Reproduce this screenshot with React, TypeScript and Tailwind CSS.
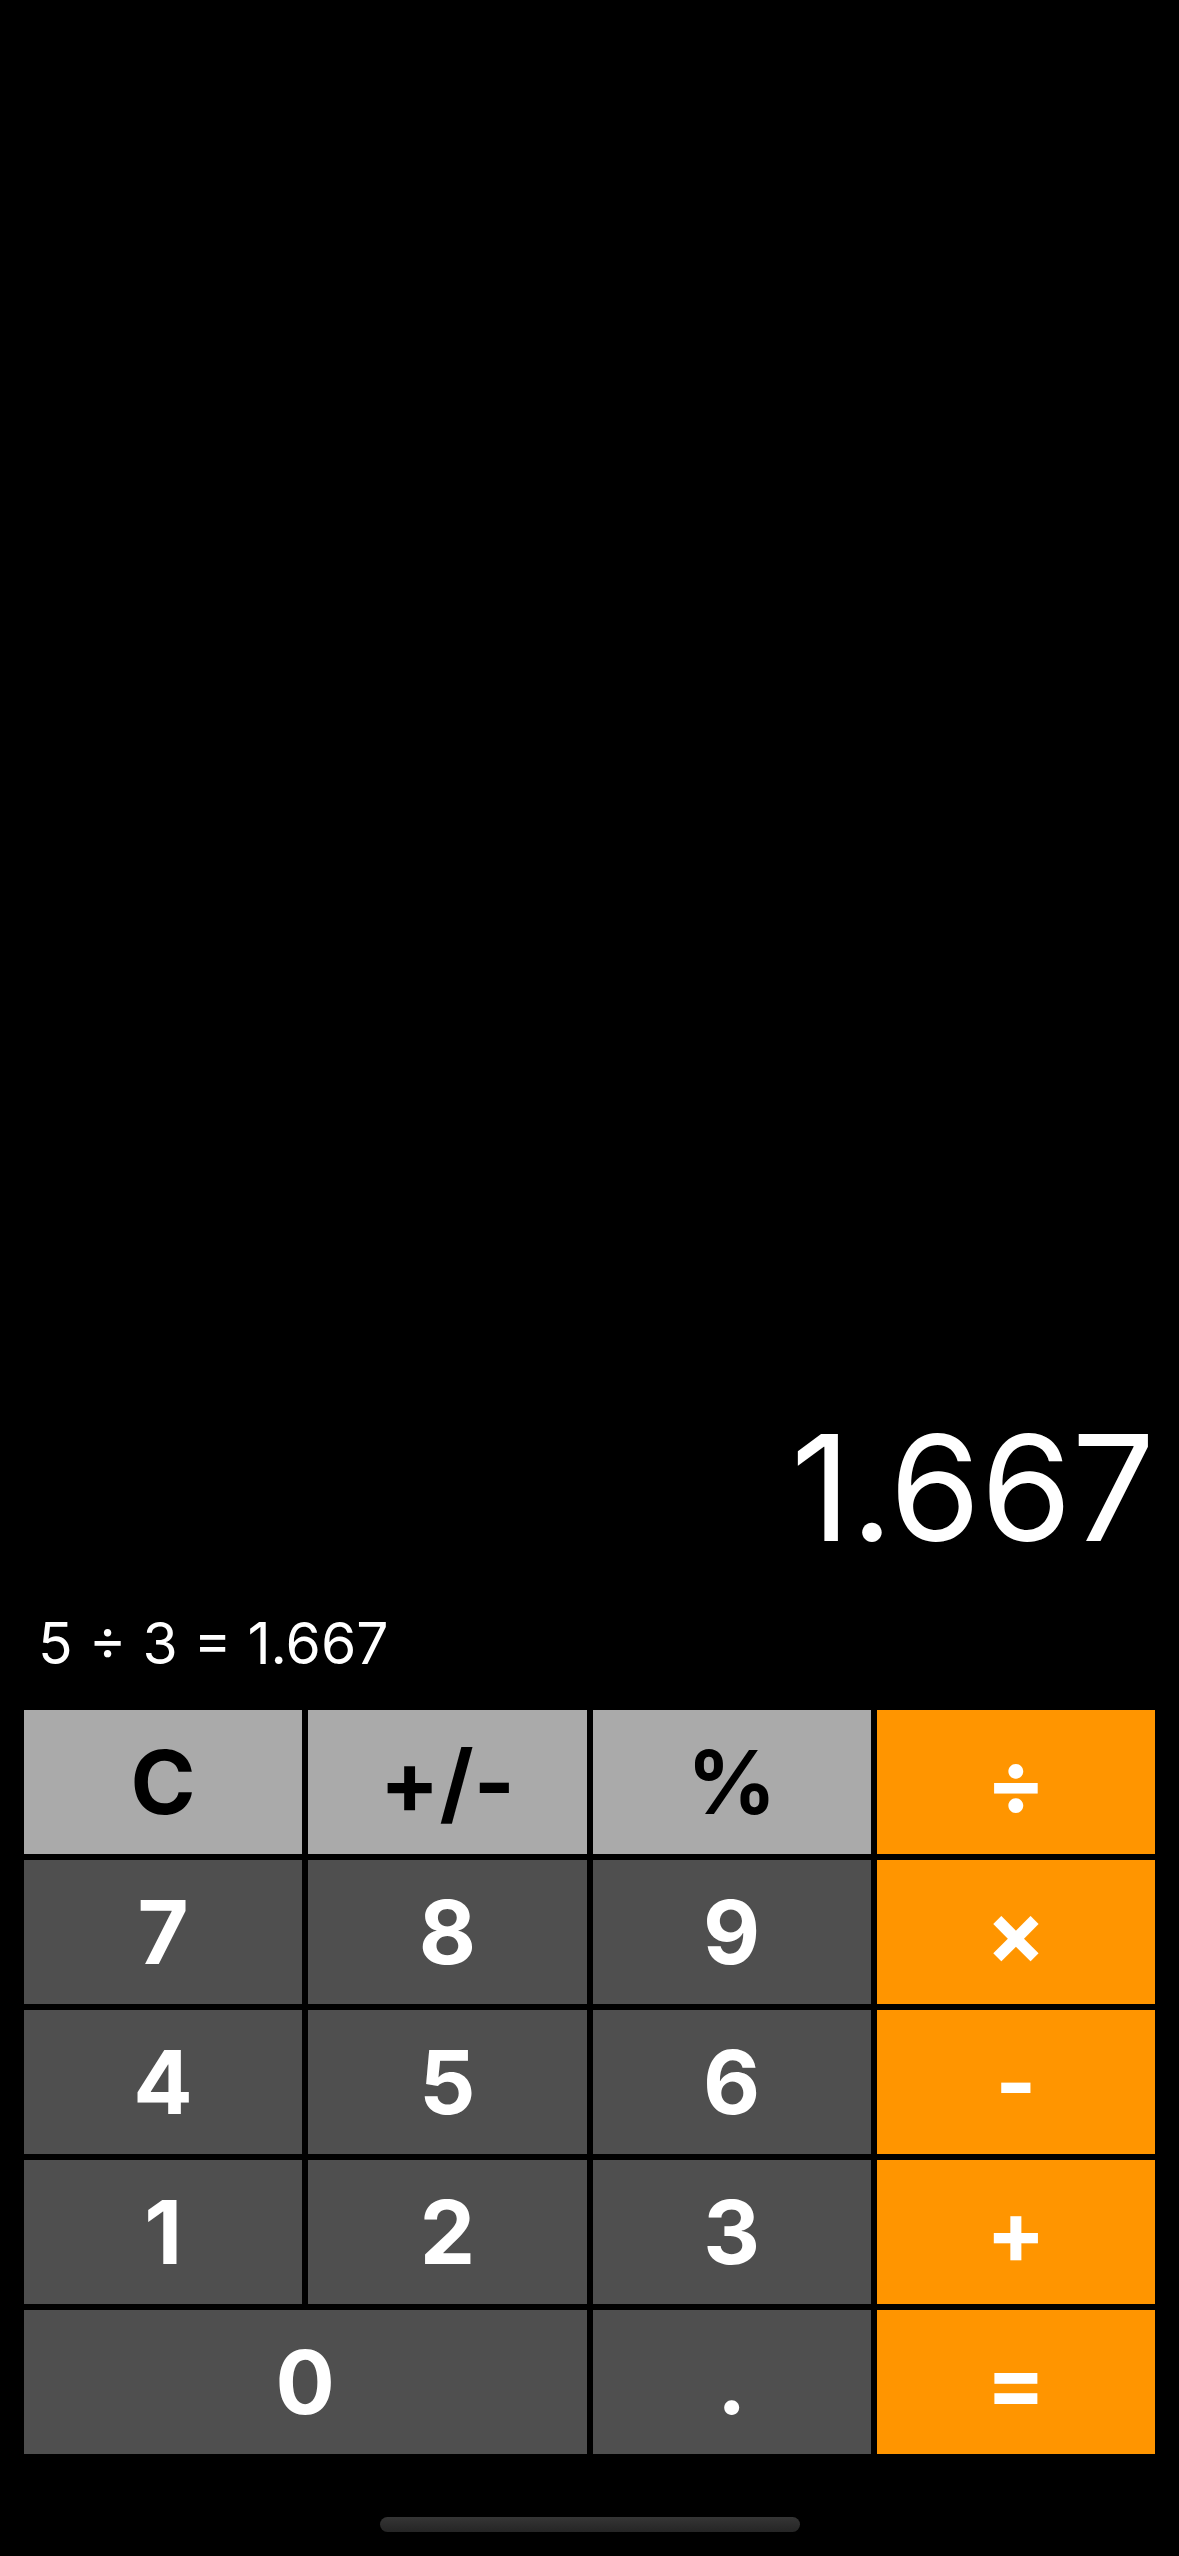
const keys = [
  { label: "C", name: "Clear", style: "bg-[#aaaaaa] text-black" },
  { label: "+/-", name: "Toggle sign", style: "bg-[#aaaaaa] text-black" },
  { label: "%", name: "Percent", style: "bg-[#aaaaaa] text-black" },
  { label: "÷", name: "Divide", style: "bg-[#ff9500] text-white" },
  { label: "7", name: "7", style: "bg-[#4f4f4f] text-white" },
  { label: "8", name: "8", style: "bg-[#4f4f4f] text-white" },
  { label: "9", name: "9", style: "bg-[#4f4f4f] text-white" },
  { label: "×", name: "Multiply", style: "bg-[#ff9500] text-white" },
  { label: "4", name: "4", style: "bg-[#4f4f4f] text-white" },
  { label: "5", name: "5", style: "bg-[#4f4f4f] text-white" },
  { label: "6", name: "6", style: "bg-[#4f4f4f] text-white" },
  { label: "-", name: "Subtract", style: "bg-[#ff9500] text-white" },
  { label: "1", name: "1", style: "bg-[#4f4f4f] text-white" },
  { label: "2", name: "2", style: "bg-[#4f4f4f] text-white" },
  { label: "3", name: "3", style: "bg-[#4f4f4f] text-white" },
  { label: "+", name: "Add", style: "bg-[#ff9500] text-white" },
  { label: "0", name: "0", style: "col-span-2 bg-[#4f4f4f] text-white" },
  { label: ".", name: "Decimal point", style: "bg-[#4f4f4f] text-white" },
  { label: "=", name: "Equals", style: "bg-[#ff9500] text-white" },
];

export default function App() {
  return (
    <main className="flex min-h-screen flex-col justify-end bg-black px-6 font-['Inter',sans-serif] text-white">
      <output className="block text-right text-[147px] leading-[174px]">1.667</output>
      <p className="mt-[33px] px-[14px] text-[57px] leading-[72px]">5 ÷ 3 = 1.667</p>
      <div className="mt-[30px] grid grid-cols-4 gap-[6px]">
        {keys.map((key) => (
          <button
            key={key.label}
            type="button"
            aria-label={key.name}
            className={`h-36 text-[88px] leading-[144px] font-bold ${key.style}`}
          >
            {key.label}
          </button>
        ))}
      </div>
      <div className="mx-auto mt-[63px] mb-6 h-[15px] w-[420px] rounded-full bg-linear-to-b from-[#353535] to-[#252525]" />
    </main>
  );
}
